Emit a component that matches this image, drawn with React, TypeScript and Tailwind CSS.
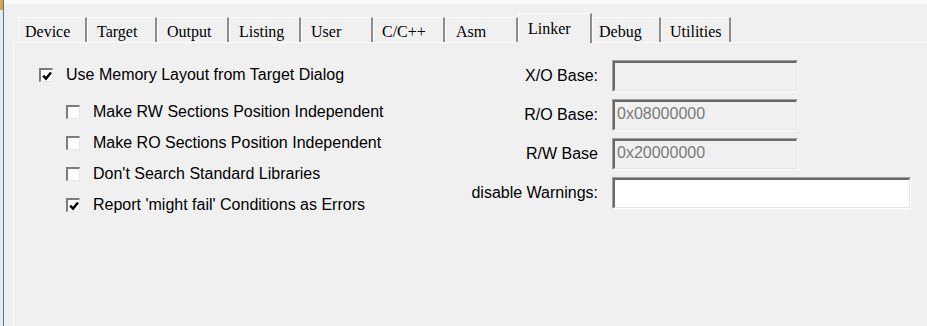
import React from "react";

const tabs = [
  { name: "Device", w: "w-[69px]", pl: "pl-[6px]" },
  { name: "Target", w: "w-[70px]", pl: "pl-[9px]" },
  { name: "Output", w: "w-[72px]", pl: "pl-[9px]" },
  { name: "Listing", w: "w-[72px]", pl: "pl-[9px]" },
  { name: "User", w: "w-[72px]", pl: "pl-[9px]" },
  { name: "C/C++", w: "w-[72px]", pl: "pl-[8px]" },
  { name: "Asm", w: "w-[73px]", pl: "pl-[10px]" },
  { name: "Linker", w: "w-[74px]", pl: "pl-[9px]", active: true },
  { name: "Debug", w: "w-[69px]", pl: "pl-[6px]" },
  { name: "Utilities", w: "w-[70px]", pl: "pl-[8px]" },
];

function Check({ checked }: { checked?: boolean }) {
  return (
    <span className="flex w-[14px] h-[14px] shrink-0 items-center justify-center bg-white border-t-2 border-l-2 border-t-[#7c7c7c] border-l-[#7c7c7c] border-b border-r border-b-[#e6e6e6] border-r-[#e6e6e6]">
      {checked && (
        <svg width="10" height="10" viewBox="0 0 10 10" className="shrink-0">
          <path d="M1.2 4.6 L4 7.6 L9 1.6" fill="none" stroke="#000" strokeWidth="2.4" />
        </svg>
      )}
    </span>
  );
}

function Row({ label, checked, indent }: { label: string; checked?: boolean; indent?: boolean }) {
  return (
    <div className={`flex items-center h-[20px] gap-[13px] ${indent ? "pl-[27px]" : ""}`}>
      <Check checked={checked} />
      <span className="whitespace-nowrap">{label}</span>
    </div>
  );
}

function Field({ value, enabled }: { value?: string; enabled?: boolean }) {
  return (
    <div className="flex h-[32px] border-t border-l border-t-[#a0a0a0] border-l-[#a0a0a0] border-b border-r border-b-white border-r-white">
      <div
        className={`flex-1 flex items-center pl-[2px] pb-[3px] text-[#7a7a7a] border-t-2 border-l-2 border-t-[#696969] border-l-[#696969] border-b border-r border-b-[#e3e3e3] border-r-[#e3e3e3] ${enabled ? "bg-white" : "bg-[#f0f0f0]"}`}
      >
        {value}
      </div>
    </div>
  );
}

export default function App() {
  return (
    <div className="w-[927px] h-[326px] overflow-hidden bg-[#f0f0f0] flex text-black text-[16px] font-['Liberation_Sans',Arial,sans-serif]">
      <div className="w-[4px] flex flex-col bg-[#e9e9e9] border-r border-r-[#3a78b2]">
        <div className="h-[10px] bg-[#e6a23a]" />
      </div>
      <div className="flex-1 flex flex-col">
        <div className="h-[4px] bg-[#fafafa]" />
        <div className="h-[38px] flex items-end pl-[14px] font-['Liberation_Serif','Times_New_Roman',serif] text-[16px]">
          {tabs.map((t) =>
            t.active ? (
              <div
                key={t.name}
                className={`${t.w} ${t.pl} relative z-10 -mb-px h-[30px] pt-[3px] bg-[#f0f0f0] border-t border-l border-t-white border-l-white border-r-2 border-r-[#8c8c8c]`}
              >
                {t.name}
              </div>
            ) : (
              <div
                key={t.name}
                className={`${t.w} ${t.pl} h-[25px] pt-[2px] border-t border-l border-t-white border-l-white border-r-2 border-r-[#8c8c8c]`}
              >
                {t.name}
              </div>
            )
          )}
        </div>
        <div className="flex-1 ml-[9px] border-t border-l border-t-white border-l-white flex items-start">
          <div className="w-[446px] pl-[25px] pt-[22px] flex flex-col">
            <Row label="Use Memory Layout from Target Dialog" checked />
            <div className="mt-[17px] flex flex-col gap-[11px]">
              <Row label="Make RW Sections Position Independent" indent />
              <Row label="Make RO Sections Position Independent" indent />
              <Row label="Don't Search Standard Libraries" indent />
              <Row label="Report 'might fail' Conditions as Errors" checked indent />
            </div>
          </div>
          <div className="mt-[17px] grid grid-cols-[138px_186px_113px] gap-x-[14px] gap-y-[7px] items-center content-start">
            <span className="text-right">X/O Base:</span>
            <Field />
            <span />
            <span className="text-right">R/O Base:</span>
            <Field value="0x08000000" />
            <span />
            <span className="text-right">R/W Base</span>
            <Field value="0x20000000" />
            <span />
            <span className="text-right whitespace-nowrap">disable Warnings:</span>
            <div className="col-span-2 w-[299px]">
              <Field enabled />
            </div>
          </div>
        </div>
      </div>
    </div>
  );
}
